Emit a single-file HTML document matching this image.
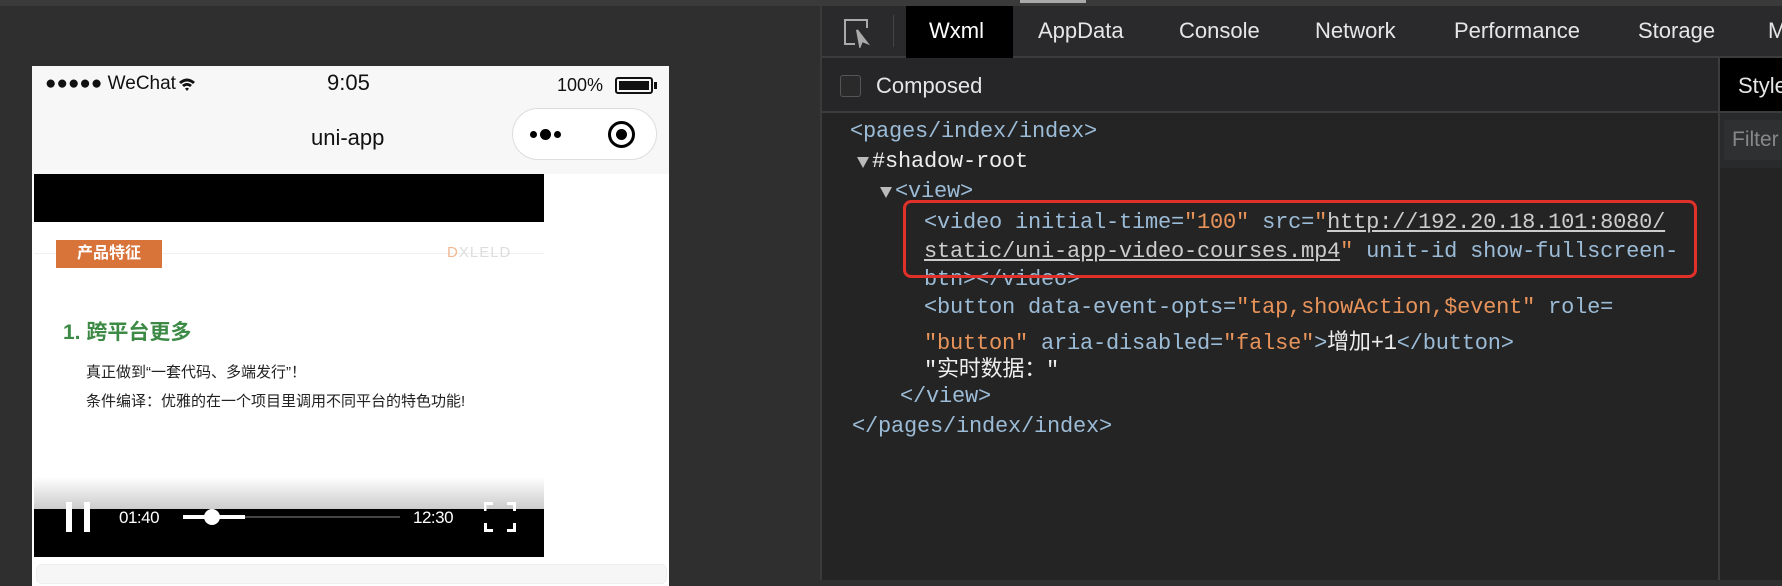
<!DOCTYPE html>
<html><head><meta charset="utf-8"><style>
*{margin:0;padding:0;box-sizing:border-box}
body{width:1782px;height:580px;background:#2f2f2f;position:relative;overflow:hidden;font-family:"Liberation Sans","Noto Sans CJK SC",sans-serif}
.a{position:absolute;white-space:nowrap}
.mono{font-family:"Liberation Mono","Noto Sans CJK SC",monospace;font-size:22px;color:#9bbbd6;letter-spacing:-0.2px}
</style></head><body>
<div class="a" style="left:0;top:0;width:1782px;height:6px;background:#3a3a3a"></div>
<div class="a" style="left:1020px;top:0;width:66px;height:3px;background:#aaa"></div>
<div class="a" style="left:32px;top:66px;width:637px;height:520px;background:#fff"></div>
<div class="a" style="left:32px;top:66px;width:637px;height:108px;background:#f7f7f7"></div>
<div class="a" style="left:45px;top:73px;font-size:19px;color:#111">●●●●● WeChat</div>
<svg class="a" style="left:178px;top:76px" width="18" height="16" viewBox="0 0 18 16"><path d="M1 6Q9 -1 17 6L15 8Q9 3 3 8Z M4 9Q9 5 14 9L12 11Q9 8.5 6 11Z M9 15L7 12.5Q9 11 11 12.5Z" fill="#111"/></svg>
<div class="a" style="left:327px;top:70px;font-size:22px;color:#111">9:05</div>
<div class="a" style="left:557px;top:75px;font-size:18px;color:#111">100%</div>
<div class="a" style="left:615px;top:77px;width:38px;height:17px;border:2px solid #111;border-radius:3px;padding:2px"><div style="width:100%;height:100%;background:#111"></div></div>
<div class="a" style="left:654px;top:82px;width:3px;height:7px;background:#111"></div>
<div class="a" style="left:311px;top:125px;font-size:22px;color:#111">uni-app</div>
<div class="a" style="left:512px;top:108px;width:145px;height:52px;border:1.5px solid #ddd;border-radius:26px;background:#fff"></div>
<div class="a" style="left:530px;top:131px;width:7px;height:7px;border-radius:50%;background:#000"></div>
<div class="a" style="left:540px;top:129px;width:11px;height:11px;border-radius:50%;background:#000"></div>
<div class="a" style="left:554px;top:131px;width:7px;height:7px;border-radius:50%;background:#000"></div>
<div class="a" style="left:608px;top:121px;width:27px;height:27px;border:3px solid #000;border-radius:50%"></div>
<div class="a" style="left:616px;top:129px;width:11px;height:11px;border-radius:50%;background:#000"></div>
<div class="a" style="left:34px;top:174px;width:510px;height:48px;background:#000"></div>
<div class="a" style="left:34px;top:222px;width:510px;height:287px;background:#fff"></div>
<div class="a" style="left:34px;top:253px;width:510px;height:1px;background:#f0f0f0"></div>
<div class="a" style="left:56px;top:240px;width:106px;height:28px;background:#d8743a;color:#fff;font-size:16px;font-weight:bold;text-align:center;line-height:28px">产品特征</div>
<div class="a" style="left:447px;top:244px;font-size:15px;color:#ddd;letter-spacing:1px"><span style="color:#f0b890">D</span>XLELD</div>
<div class="a" style="left:63px;top:316px;font-size:21px;font-weight:bold;color:#3c8a45">1. 跨平台更多</div>
<div class="a" style="left:86px;top:361px;font-size:15px;color:#222">真正做到“一套代码、多端发行”！</div>
<div class="a" style="left:86px;top:390px;font-size:15px;color:#222">条件编译：优雅的在一个项目里调用不同平台的特色功能!</div>
<div class="a" style="left:34px;top:477px;width:510px;height:32px;background:linear-gradient(#fff,#ccc)"></div>
<div class="a" style="left:34px;top:509px;width:510px;height:48px;background:#000"></div>
<div class="a" style="left:66px;top:502px;width:6px;height:30px;background:#fff"></div>
<div class="a" style="left:84px;top:502px;width:6px;height:30px;background:#fff"></div>
<div class="a" style="left:119px;top:508px;font-size:17px;color:#fff;letter-spacing:-0.5px">01:40</div>
<div class="a" style="left:183px;top:516px;width:217px;height:2px;background:#444"></div>
<div class="a" style="left:183px;top:515px;width:62px;height:4px;background:#fff"></div>
<div class="a" style="left:204px;top:509px;width:16px;height:16px;border-radius:50%;background:#fff"></div>
<div class="a" style="left:413px;top:508px;font-size:17px;color:#fff;letter-spacing:-0.5px">12:30</div>
<svg class="a" style="left:484px;top:502px" width="32" height="30" viewBox="0 0 32 30" fill="none" stroke="#fff" stroke-width="3"><path d="M1 9V1.5H9M23 1.5H30.5V9M30.5 21V28.5H23M9 28.5H1.5V21"/></svg>
<div class="a" style="left:36px;top:564px;width:631px;height:20px;background:#f6f6f6;border-radius:6px;border:1px solid #eee"></div>
<div class="a" style="left:820px;top:6px;width:962px;height:574px;background:#242424;border-left:2px solid #3a3a3a"></div>
<div class="a" style="left:822px;top:6px;width:960px;height:52px;background:#2a2a2c;border-bottom:2px solid #3c3c3c"></div>
<svg class="a" style="left:843px;top:18px" width="28" height="30" viewBox="0 0 28 30" fill="none" stroke="#aaa" stroke-width="2"><path d="M12 26H2V2H24V10"/><path d="M14 12L24 25L19 23L17 28Z" fill="#aaa"/></svg>
<div class="a" style="left:893px;top:15px;width:1px;height:32px;background:#444"></div>
<div class="a" style="left:906px;top:6px;width:107px;height:52px;background:#000"></div>
<div class="a" style="left:929px;top:18px;font-size:22px;color:#fff">Wxml</div>
<div class="a" style="left:1038px;top:18px;font-size:22px;color:#e6e6e6">AppData</div>
<div class="a" style="left:1179px;top:18px;font-size:22px;color:#e6e6e6">Console</div>
<div class="a" style="left:1315px;top:18px;font-size:22px;color:#e6e6e6">Network</div>
<div class="a" style="left:1454px;top:18px;font-size:22px;color:#e6e6e6">Performance</div>
<div class="a" style="left:1638px;top:18px;font-size:22px;color:#e6e6e6">Storage</div>
<div class="a" style="left:1768px;top:18px;font-size:22px;color:#e6e6e6">M</div>
<div class="a" style="left:822px;top:58px;width:896px;height:55px;background:#262628;border-bottom:2px solid #3c3c3c"></div>
<div class="a" style="left:840px;top:75px;width:21px;height:22px;border:1.5px solid #555;border-radius:3px;background:#2a2a2a"></div>
<div class="a" style="left:876px;top:73px;font-size:22px;color:#e6e6e6">Composed</div>
<div class="a" style="left:1718px;top:58px;width:2px;height:522px;background:#3c3c3c"></div>
<div class="a" style="left:1720px;top:58px;width:62px;height:55px;background:#000;border-bottom:2px solid #3c3c3c"></div>
<div class="a" style="left:1738px;top:73px;font-size:22px;color:#e6e6e6">Style</div>
<div class="a" style="left:1720px;top:113px;width:62px;height:55px;background:#282a2c"></div>
<div class="a" style="left:1724px;top:120px;width:58px;height:40px;background:#2e3032"></div>
<div class="a" style="left:1732px;top:128px;font-size:21px;color:#888">Filter</div>
<div class="a mono" style="left:850px;top:119px">&lt;pages/index/index&gt;</div>
<div class="a" style="left:857px;top:157px;width:0;height:0;border-left:6px solid transparent;border-right:6px solid transparent;border-top:11px solid #bbb"></div>
<div class="a mono" style="left:872px;top:149px;color:#eee">#shadow-root</div>
<div class="a" style="left:880px;top:187px;width:0;height:0;border-left:6px solid transparent;border-right:6px solid transparent;border-top:11px solid #bbb"></div>
<div class="a mono" style="left:895px;top:179px">&lt;view&gt;</div>
<div class="a mono" style="left:924px;top:210px">&lt;video initial-time=<span style="color:#e8935a">"100"</span> src=<span style="color:#e8935a">"</span><span style="color:#ccc;text-decoration:underline">http://192.20.18.101:8080/</span></div>
<div class="a mono" style="left:924px;top:239px"><span style="color:#ccc;text-decoration:underline">static/uni-app-video-courses.mp4</span><span style="color:#e8935a">"</span> unit-id show-fullscreen-</div>
<div class="a mono" style="left:924px;top:267px">btn&gt;&lt;/video&gt;</div>
<div class="a mono" style="left:924px;top:295px">&lt;button data-event-opts=<span style="color:#e8935a">"tap,showAction,$event"</span> role=</div>
<div class="a mono" style="left:924px;top:324px"><span style="color:#e8935a">"button"</span> aria-disabled=<span style="color:#e8935a">"false"</span>&gt;<span style="color:#eee">增加+1</span>&lt;/button&gt;</div>
<div class="a mono" style="left:924px;top:351px;color:#eee">"实时数据："</div>
<div class="a mono" style="left:900px;top:384px">&lt;/view&gt;</div>
<div class="a mono" style="left:852px;top:414px">&lt;/pages/index/index&gt;</div>
<div class="a" style="left:903px;top:200px;width:794px;height:78px;border:3px solid #e0302a;border-radius:8px"></div>
</body></html>
